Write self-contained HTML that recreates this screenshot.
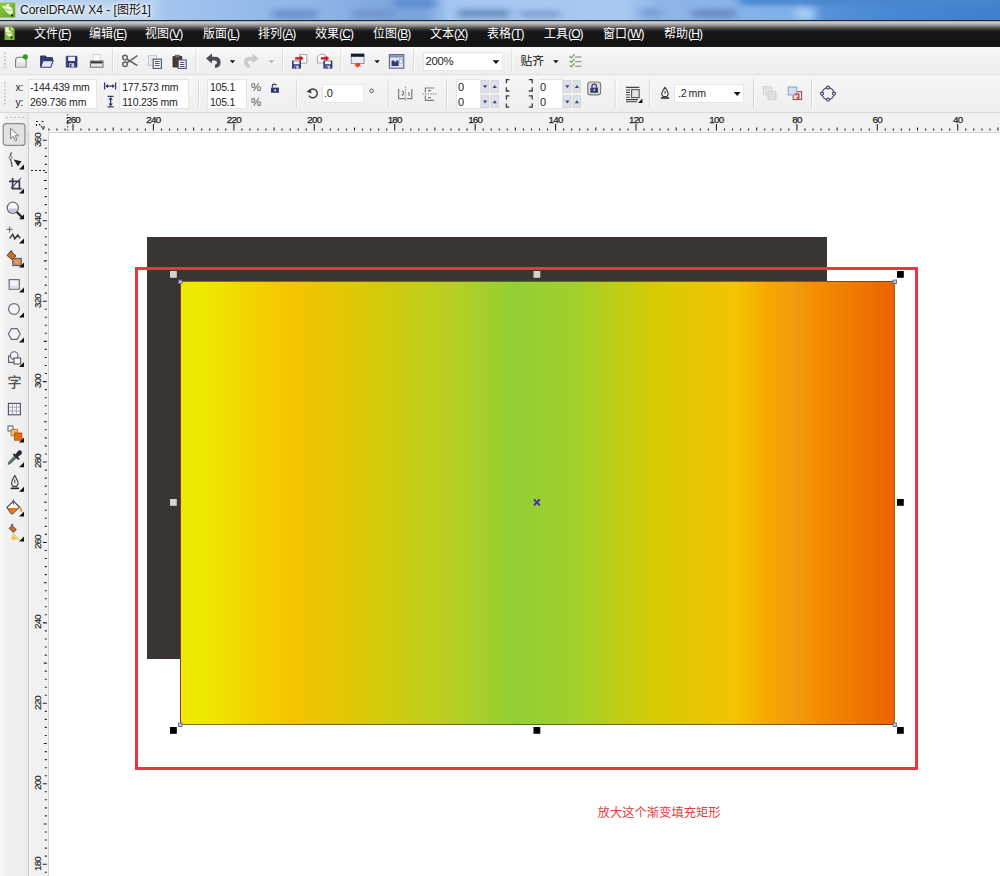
<!DOCTYPE html><html lang="zh"><head><meta charset="utf-8"><title>CorelDRAW X4 - [图形1]</title><style>
*{box-sizing:border-box;margin:0;padding:0}
html,body{width:1000px;height:876px;overflow:hidden;background:#fff}
body{position:relative;font-family:"Liberation Sans","Noto Sans CJK SC",sans-serif;font-size:11px;color:#222}
.abs{position:absolute}
#title{left:0;top:0;width:1000px;height:21px;overflow:hidden;background:#8cb3e7}
#title .t{left:20px;top:2px;font-size:12px;color:#111;text-shadow:0 0 5px #fff,0 0 3px #fff;white-space:nowrap;line-height:16px}
#tline{left:0;top:20px;width:1000px;height:1px;background:#1a2a3a}
#menu{left:0;top:21px;width:1000px;height:26px;background:linear-gradient(180deg,#8a8a8a 0,#d2d2d2 1px,#c2c2c2 2px,#9c9c9c 4px,#6a6a6a 6px,#3c3c3c 8px,#1e1e1e 10px,#151515 12px,#161616 100%)}
.mi{top:28px;height:13px;line-height:13px;font-size:12px;color:#fff;white-space:nowrap}
.mi u{text-decoration:underline}
.mi .l{font-size:12px;letter-spacing:-0.9px}
#tb1{left:0;top:47px;width:1000px;height:27px;background:linear-gradient(180deg,#fbfbfb 0,#f2f2f2 40%,#eeeeee 100%)}
#tb2{left:0;top:74px;width:1000px;height:39px;background:linear-gradient(180deg,#dcdcdc 0,#f7f7f7 2px,#f2f2f2 50%,#efefef 100%)}
#hr{left:0;top:112px;width:1000px;height:20.5px;background:#f1f1f1;border-top:1px solid #d9d9d9;border-bottom:1px solid #d6d6d6}
#tbox{left:0;top:113px;width:29px;height:763px;background:linear-gradient(90deg,#fafafa 0,#f0f0f0 7px,#efefef 24px,#e6e6e6 28px,#cfcfcf 29px)}
#vr{left:28px;top:132px;width:20.5px;height:744px;background:#f1f1f1;border-right:1px solid #d0d0d0;border-left:1px solid #cdcdcd}
#cv{left:48.5px;top:132.5px;width:952px;height:744px;background:#fff}
.inp{background:#fff;border:1px solid #e6e6e6}
.tx{white-space:nowrap;color:#222;font-size:10.5px;line-height:12px;height:12px;letter-spacing:-0.22px}
.rl{font-size:9.8px;line-height:10px;height:10px;color:#1a1a1a;white-space:nowrap;text-align:center;width:30px;letter-spacing:-0.75px;-webkit-text-stroke:0.25px #222}
.vl{font-size:9.8px;line-height:10px;height:10px;color:#1a1a1a;white-space:nowrap;text-align:center;width:30px;letter-spacing:-0.8px;-webkit-text-stroke:0.15px #222;transform:rotate(-90deg);transform-origin:50% 50%}
svg{position:absolute;left:0;top:0;overflow:visible}
</style></head><body>
<div id="title" class="abs"><svg width="1000" height="21" viewBox="0 0 1000 21" style="overflow:hidden">
<defs><filter id="bl" x="-20%" y="-100%" width="140%" height="300%"><feGaussianBlur stdDeviation="4 2.5"/></filter>
<linearGradient id="tg" x1="0" x2="1000" gradientUnits="userSpaceOnUse"><stop offset="0" stop-color="#cfdef0"/><stop offset=".145" stop-color="#c4d8f0"/><stop offset=".165" stop-color="#a3c4ee"/><stop offset=".25" stop-color="#95bbea"/><stop offset=".33" stop-color="#8cb3e7"/><stop offset=".40" stop-color="#7aa4dc"/><stop offset=".425" stop-color="#7aa4dc"/><stop offset=".45" stop-color="#a4c6f0"/><stop offset=".62" stop-color="#a8c9f1"/><stop offset=".66" stop-color="#8fb6e8"/><stop offset=".74" stop-color="#86b2ea"/><stop offset=".80" stop-color="#7eafea"/><stop offset=".825" stop-color="#5592da"/><stop offset=".9" stop-color="#4687d2"/><stop offset="1" stop-color="#3f80cc"/></linearGradient></defs>
<rect width="1000" height="21" fill="url(#tg)"/>
<g filter="url(#bl)">
<rect x="272" y="9" width="45" height="10" fill="#6f95cf"/>
<rect x="352" y="9" width="42" height="10" fill="#7299d2"/>
<rect x="395" y="-2" width="40" height="10" fill="#5f8fd2"/>
<rect x="458" y="9" width="52" height="9" fill="#7496c6"/>
<rect x="520" y="10" width="40" height="8" fill="#86a6d2"/>
<rect x="640" y="8" width="22" height="10" fill="#7ba2d8"/>
<rect x="692" y="9" width="44" height="9" fill="#6a90c8"/>
<rect x="740" y="-3" width="260" height="8" fill="#4a86cc"/>
<rect x="796" y="8" width="18" height="12" fill="#a4caf4"/>
<rect x="0" y="-4" width="150" height="8" fill="#b4cdee"/>
</g></svg><div class="abs t">CorelDRAW X4 - [图形1]</div></div>
<div id="tline" class="abs"></div>
<div id="menu" class="abs"></div>
<div class="abs mi" style="left:34px">文件<span class="l">(<u>F</u>)</span></div>
<div class="abs mi" style="left:89px">编辑<span class="l">(<u>E</u>)</span></div>
<div class="abs mi" style="left:145px">视图<span class="l">(<u>V</u>)</span></div>
<div class="abs mi" style="left:203px">版面<span class="l">(<u>L</u>)</span></div>
<div class="abs mi" style="left:258px">排列<span class="l">(<u>A</u>)</span></div>
<div class="abs mi" style="left:315px">效果<span class="l">(<u>C</u>)</span></div>
<div class="abs mi" style="left:373px">位图<span class="l">(<u>B</u>)</span></div>
<div class="abs mi" style="left:430px">文本<span class="l">(<u>X</u>)</span></div>
<div class="abs mi" style="left:487px">表格<span class="l">(<u>T</u>)</span></div>
<div class="abs mi" style="left:544px">工具<span class="l">(<u>O</u>)</span></div>
<div class="abs mi" style="left:603px">窗口<span class="l">(<u>W</u>)</span></div>
<div class="abs mi" style="left:664px">帮助<span class="l">(<u>H</u>)</span></div>
<div id="tb1" class="abs"></div><div id="tb2" class="abs"></div>
<div id="hr" class="abs"></div><div id="tbox" class="abs"></div><div id="vr" class="abs"></div>
<div id="cv" class="abs"></div>
<div class="abs" style="left:147px;top:237px;width:680px;height:422px;background:#3a3533"></div>
<div class="abs" style="left:180px;top:281px;width:715px;height:444px;border:1px solid rgba(50,40,20,.6);background:linear-gradient(90deg,#ecec00 0,#f0e600 4%,#f5c200 15.8%,#d7ca08 27%,#b8cf24 38%,#92cf34 47%,#a2d02c 55%,#d5cb06 66%,#f5c200 78%,#f4a800 82.5%,#f29c0c 86%,#f38e00 89%,#f07a00 94%,#ee6600 99%,#ee6400 100%)"></div>
<div class="abs" style="left:135px;top:267px;width:783px;height:503px;border:3px solid #e8383e"></div>
<div class="abs" style="left:597.6px;top:804.5px;font-size:12.3px;font-weight:400;color:#e23c40;white-space:nowrap;line-height:16px">放大这个渐变填充矩形</div>

<svg width="1000" height="876" viewBox="0 0 1000 876"><rect x="170" y="271" width="6.8" height="6.8" fill="#d2d2d2"/><rect x="533.5" y="271" width="6.8" height="6.8" fill="#d2d2d2"/><rect x="897" y="271" width="6.8" height="6.8" fill="#000"/><rect x="170" y="499" width="6.8" height="6.8" fill="#d2d2d2"/><rect x="897" y="499" width="6.8" height="6.8" fill="#000"/><rect x="170" y="727" width="6.8" height="6.8" fill="#000"/><rect x="533.5" y="727" width="6.8" height="6.8" fill="#000"/><rect x="897" y="727" width="6.8" height="6.8" fill="#000"/><rect x="178.60000000000002" y="280.1" width="3.4" height="3.4" fill="#c9cde6" stroke="#5a5f96" stroke-width=".9"/><rect x="893.0" y="280.1" width="3.4" height="3.4" fill="#c9cde6" stroke="#5a5f96" stroke-width=".9"/><rect x="178.60000000000002" y="723.0999999999999" width="3.4" height="3.4" fill="#c9cde6" stroke="#5a5f96" stroke-width=".9"/><rect x="893.0" y="723.0999999999999" width="3.4" height="3.4" fill="#c9cde6" stroke="#5a5f96" stroke-width=".9"/><path d="M534 499.4l5.800 5.800M539.800 499.400l-5.800 5.800" stroke="#4a2ea6" stroke-width="2" fill="none"/></svg>
<svg width="1000" height="876" viewBox="0 0 1000 876"><path d="M48.9 128.6v2M56.9 128.6v2M65.0 128.6v2M73.0 124.0v6.6M81.0 128.6v2M89.1 128.6v2M97.1 128.6v2M105.2 128.6v2M113.2 127.6v3M121.3 128.6v2M129.3 128.6v2M137.3 128.6v2M145.4 128.6v2M153.4 124.0v6.6M161.5 128.6v2M169.5 128.6v2M177.6 128.6v2M185.6 128.6v2M193.6 127.6v3M201.7 128.6v2M209.7 128.6v2M217.8 128.6v2M225.8 128.6v2M233.9 124.0v6.6M241.9 128.6v2M249.9 128.6v2M258.0 128.6v2M266.0 128.6v2M274.1 127.6v3M282.1 128.6v2M290.2 128.6v2M298.2 128.6v2M306.2 128.6v2M314.3 124.0v6.6M322.3 128.6v2M330.4 128.6v2M338.4 128.6v2M346.5 128.6v2M354.5 127.6v3M362.5 128.6v2M370.6 128.6v2M378.6 128.6v2M386.7 128.6v2M394.7 124.0v6.6M402.8 128.6v2M410.8 128.6v2M418.8 128.6v2M426.9 128.6v2M434.9 127.6v3M443.0 128.6v2M451.0 128.6v2M459.1 128.6v2M467.1 128.6v2M475.2 124.0v6.6M483.2 128.6v2M491.2 128.6v2M499.3 128.6v2M507.3 128.6v2M515.4 127.6v3M523.4 128.6v2M531.5 128.6v2M539.5 128.6v2M547.5 128.6v2M555.6 124.0v6.6M563.6 128.6v2M571.7 128.6v2M579.7 128.6v2M587.8 128.6v2M595.8 127.6v3M603.8 128.6v2M611.9 128.6v2M619.9 128.6v2M628.0 128.6v2M636.0 124.0v6.6M644.1 128.6v2M652.1 128.6v2M660.1 128.6v2M668.2 128.6v2M676.2 127.6v3M684.3 128.6v2M692.3 128.6v2M700.4 128.6v2M708.4 128.6v2M716.4 124.0v6.6M724.5 128.6v2M732.5 128.6v2M740.6 128.6v2M748.6 128.6v2M756.7 127.6v3M764.7 128.6v2M772.7 128.6v2M780.8 128.6v2M788.8 128.6v2M796.9 124.0v6.6M804.9 128.6v2M813.0 128.6v2M821.0 128.6v2M829.0 128.6v2M837.1 127.6v3M845.1 128.6v2M853.2 128.6v2M861.2 128.6v2M869.3 128.6v2M877.3 124.0v6.6M885.3 128.6v2M893.4 128.6v2M901.4 128.6v2M909.5 128.6v2M917.5 127.6v3M925.6 128.6v2M933.6 128.6v2M941.6 128.6v2M949.7 128.6v2M957.7 124.0v6.6M965.8 128.6v2M973.8 128.6v2M981.9 128.6v2M989.9 128.6v2M997.9 127.6v3" stroke="#222" stroke-width="1.1" fill="none"/><path d="M42.8 140.3h4M44.8 148.3h2M44.8 156.4h2M44.8 164.4h2M44.8 172.5h2M43.8 180.5h3M44.8 188.6h2M44.8 196.6h2M44.8 204.6h2M44.8 212.7h2M42.8 220.7h4M44.8 228.8h2M44.8 236.8h2M44.8 244.9h2M44.8 252.9h2M43.8 260.9h3M44.8 269.0h2M44.8 277.0h2M44.8 285.1h2M44.8 293.1h2M42.8 301.2h4M44.8 309.2h2M44.8 317.2h2M44.8 325.3h2M44.8 333.3h2M43.8 341.4h3M44.8 349.4h2M44.8 357.5h2M44.8 365.5h2M44.8 373.5h2M42.8 381.6h4M44.8 389.6h2M44.8 397.7h2M44.8 405.7h2M44.8 413.8h2M43.8 421.8h3M44.8 429.8h2M44.8 437.9h2M44.8 445.9h2M44.8 454.0h2M42.8 462.0h4M44.8 470.1h2M44.8 478.1h2M44.8 486.1h2M44.8 494.2h2M43.8 502.2h3M44.8 510.3h2M44.8 518.3h2M44.8 526.4h2M44.8 534.4h2M42.8 542.5h4M44.8 550.5h2M44.8 558.5h2M44.8 566.6h2M44.8 574.6h2M43.8 582.7h3M44.8 590.7h2M44.8 598.8h2M44.8 606.8h2M44.8 614.8h2M42.8 622.9h4M44.8 630.9h2M44.8 639.0h2M44.8 647.0h2M44.8 655.1h2M43.8 663.1h3M44.8 671.1h2M44.8 679.2h2M44.8 687.2h2M44.8 695.3h2M42.8 703.3h4M44.8 711.4h2M44.8 719.4h2M44.8 727.4h2M44.8 735.5h2M43.8 743.5h3M44.8 751.6h2M44.8 759.6h2M44.8 767.7h2M44.8 775.7h2M42.8 783.7h4M44.8 791.8h2M44.8 799.8h2M44.8 807.9h2M44.8 815.9h2M43.8 824.0h3M44.8 832.0h2M44.8 840.0h2M44.8 848.1h2M44.8 856.1h2M42.8 864.2h4M44.8 872.2h2" stroke="#222" stroke-width="1.1" fill="none"/><path d="M67.7 114v17" stroke="#444" stroke-width="1" stroke-dasharray="1.5 1.5" fill="none"/><path d="M31 170.5h16" stroke="#222" stroke-width="1" stroke-dasharray="2 2" fill="none"/><path d="M36 121.5h3M41.5 121.5h3M36.5 124v2.5M39 124l5 5M44 126v3h-3" stroke="#222" stroke-width="1.1" fill="none" stroke-dasharray="2 1"/></svg>
<div class="abs rl" style="left:58.0px;top:115.2px">260</div>
<div class="abs rl" style="left:138.4px;top:115.2px">240</div>
<div class="abs rl" style="left:218.9px;top:115.2px">220</div>
<div class="abs rl" style="left:299.3px;top:115.2px">200</div>
<div class="abs rl" style="left:379.7px;top:115.2px">180</div>
<div class="abs rl" style="left:460.2px;top:115.2px">160</div>
<div class="abs rl" style="left:540.6px;top:115.2px">140</div>
<div class="abs rl" style="left:621.0px;top:115.2px">120</div>
<div class="abs rl" style="left:701.4px;top:115.2px">100</div>
<div class="abs rl" style="left:781.9px;top:115.2px">80</div>
<div class="abs rl" style="left:862.3px;top:115.2px">60</div>
<div class="abs rl" style="left:942.7px;top:115.2px">40</div>
<div class="abs vl" style="left:23.3px;top:134.7px">360</div>
<div class="abs vl" style="left:23.3px;top:215.1px">340</div>
<div class="abs vl" style="left:23.3px;top:295.6px">320</div>
<div class="abs vl" style="left:23.3px;top:376.0px">300</div>
<div class="abs vl" style="left:23.3px;top:456.4px">280</div>
<div class="abs vl" style="left:23.3px;top:536.9px">260</div>
<div class="abs vl" style="left:23.3px;top:617.3px">240</div>
<div class="abs vl" style="left:23.3px;top:697.7px">220</div>
<div class="abs vl" style="left:23.3px;top:778.1px">200</div>
<div class="abs vl" style="left:23.3px;top:858.6px">180</div>
<div class="abs inp" style="left:27.5px;top:78.8px;width:69.1px;height:30.60000000000001px"></div>
<div class="abs inp" style="left:119.2px;top:78.8px;width:70.2px;height:30.60000000000001px"></div>
<div class="abs inp" style="left:207px;top:78.8px;width:39.599999999999994px;height:30.60000000000001px"></div>
<div class="abs inp" style="left:321.6px;top:83.6px;width:42.0px;height:19.200000000000003px"></div>
<div class="abs inp" style="left:455.6px;top:78.8px;width:25.399999999999977px;height:30.60000000000001px"></div>
<div class="abs inp" style="left:537.6px;top:78.8px;width:25.399999999999977px;height:30.60000000000001px"></div>
<div class="abs inp" style="left:674.4px;top:84.2px;width:69.60000000000002px;height:18.599999999999994px"></div>
<div class="abs inp" style="left:422.6px;top:51.8px;width:80.79999999999995px;height:19.200000000000003px"></div>
<div class="abs tx" style="left:15.6px;top:81px;">x:</div>
<div class="abs tx" style="left:15.6px;top:96.2px;">y:</div>
<div class="abs tx" style="left:30px;top:81px;">-144.439 mm</div>
<div class="abs tx" style="left:30px;top:96.2px;">269.736 mm</div>
<div class="abs tx" style="left:122.2px;top:81px;">177.573 mm</div>
<div class="abs tx" style="left:122.2px;top:96.2px;">110.235 mm</div>
<div class="abs tx" style="left:210px;top:81px;">105.1</div>
<div class="abs tx" style="left:210px;top:96.2px;">105.1</div>
<div class="abs tx" style="left:251px;top:81px;font-size:11.5px;color:#555">%</div>
<div class="abs tx" style="left:251px;top:96.2px;font-size:11.5px;color:#555">%</div>
<div class="abs tx" style="left:324px;top:87.2px;font-size:11px">.0</div>
<div class="abs tx" style="left:458px;top:81px;font-size:11px">0</div>
<div class="abs tx" style="left:458px;top:96.2px;font-size:11px">0</div>
<div class="abs tx" style="left:540px;top:81px;font-size:11px">0</div>
<div class="abs tx" style="left:540px;top:96.2px;font-size:11px">0</div>
<div class="abs tx" style="left:678px;top:87.4px;font-size:10.6px;word-spacing:-0.5px">.2 mm</div>
<div class="abs tx" style="left:425.6px;top:55px;font-size:11.3px;letter-spacing:-0.3px">200%</div>
<div class="abs tx" style="left:520.6px;top:54.6px;font-size:11.8px;color:#111;line-height:13px;height:13px">贴齐</div>
<svg width="1000" height="876" viewBox="0 0 1000 876"><rect x="4.2" y="52.5" width="1.6" height="1.6" fill="#c2c2c2"/><rect x="4.2" y="56.0" width="1.6" height="1.6" fill="#c2c2c2"/><rect x="4.2" y="59.5" width="1.6" height="1.6" fill="#c2c2c2"/><rect x="4.2" y="63.0" width="1.6" height="1.6" fill="#c2c2c2"/><rect x="4.2" y="66.5" width="1.6" height="1.6" fill="#c2c2c2"/><rect x="4.2" y="82" width="1.6" height="1.6" fill="#c2c2c2"/><rect x="4.2" y="85.5" width="1.6" height="1.6" fill="#c2c2c2"/><rect x="4.2" y="89.0" width="1.6" height="1.6" fill="#c2c2c2"/><rect x="4.2" y="92.5" width="1.6" height="1.6" fill="#c2c2c2"/><rect x="4.2" y="96.0" width="1.6" height="1.6" fill="#c2c2c2"/><rect x="4.2" y="99.5" width="1.6" height="1.6" fill="#c2c2c2"/><rect x="4.2" y="103.0" width="1.6" height="1.6" fill="#c2c2c2"/><path d="M112.5 49.5v21.5" stroke="#dadada" stroke-width="1"/><path d="M113.5 49.5v21.5" stroke="#fdfdfd" stroke-width="1"/><path d="M196 49.5v21.5" stroke="#dadada" stroke-width="1"/><path d="M197 49.5v21.5" stroke="#fdfdfd" stroke-width="1"/><path d="M282.6 49.5v21.5" stroke="#dadada" stroke-width="1"/><path d="M283.6 49.5v21.5" stroke="#fdfdfd" stroke-width="1"/><path d="M340.8 49.5v21.5" stroke="#dadada" stroke-width="1"/><path d="M341.8 49.5v21.5" stroke="#fdfdfd" stroke-width="1"/><path d="M413.6 49.5v21.5" stroke="#dadada" stroke-width="1"/><path d="M414.6 49.5v21.5" stroke="#fdfdfd" stroke-width="1"/><path d="M511.8 49.5v21.5" stroke="#dadada" stroke-width="1"/><path d="M512.8 49.5v21.5" stroke="#fdfdfd" stroke-width="1"/><path d="M198.4 79v29" stroke="#d4d4d4" stroke-width="1"/><path d="M199.4 79v29" stroke="#fdfdfd" stroke-width="1"/><path d="M296.4 79v29" stroke="#d4d4d4" stroke-width="1"/><path d="M297.4 79v29" stroke="#fdfdfd" stroke-width="1"/><path d="M388.3 79v29" stroke="#d4d4d4" stroke-width="1"/><path d="M389.3 79v29" stroke="#fdfdfd" stroke-width="1"/><path d="M446.6 79v29" stroke="#d4d4d4" stroke-width="1"/><path d="M447.6 79v29" stroke="#fdfdfd" stroke-width="1"/><path d="M615.2 79v29" stroke="#d4d4d4" stroke-width="1"/><path d="M616.2 79v29" stroke="#fdfdfd" stroke-width="1"/><path d="M649.4 79v29" stroke="#d4d4d4" stroke-width="1"/><path d="M650.4 79v29" stroke="#fdfdfd" stroke-width="1"/><path d="M753.5 79v29" stroke="#d4d4d4" stroke-width="1"/><path d="M754.5 79v29" stroke="#fdfdfd" stroke-width="1"/><path d="M811.6 79v29" stroke="#d4d4d4" stroke-width="1"/><path d="M812.6 79v29" stroke="#fdfdfd" stroke-width="1"/><path d="M15.6 67V60.5q0-3.2 3.2-3.2H26V67z" fill="#f4f4f6" stroke="#7a7a80" stroke-width="1.1"/><path d="M16.2 62.5h9.3V66.5h-9.3z" fill="#e2e2e8"/><circle cx="25.3" cy="56.8" r="2.6" fill="#2d9a27"/><path d="M40.6 67V56h5l1.2 1.6h5.6V60" fill="#353a72" stroke="#353a72" stroke-width="1"/><path d="M40.8 67.2l2.2-6.6h10.2l-2.4 6.6z" fill="#e9e9f2" stroke="#353a72" stroke-width="1.1"/><path d="M66.2 56.3h10.8v10.8h-10.8z" fill="#353a72" stroke="#353a72" stroke-width=".8"/><rect x="68.2" y="56.8" width="6.8" height="4.2" fill="#f2f2f8"/><rect x="69" y="63.2" width="5.2" height="3.9" fill="#c9cbe0"/><rect x="69.8" y="64" width="1.6" height="3" fill="#353a72"/><rect x="93" y="54.4" width="7.2" height="7" fill="#fff" stroke="#c8c8c8" stroke-width=".8"/><rect x="90.4" y="61" width="12.6" height="6.2" fill="#e6e6e6" stroke="#6a6a6a" stroke-width="1"/><rect x="91" y="61.4" width="11.4" height="2" fill="#333"/><g fill="none" stroke="#636368" stroke-width="1.5"><circle cx="125" cy="57.6" r="2.3"/><circle cx="125" cy="64.2" r="2.3"/><path d="M126.8 59l10.6 6.6M126.8 62.8l10.6-7.2"/></g><rect x="148.6" y="55.8" width="8" height="9.4" fill="#f4f4f8" stroke="#b4b6c8" stroke-width=".9"/><path d="M150 58.5h5M150 60.5h5M150 62.5h3" stroke="#c2c4d4" stroke-width=".8"/><rect x="153.2" y="59.2" width="8.2" height="9.2" fill="#f6f6fa" stroke="#4a4e80" stroke-width="1.1"/><path d="M155 61.5h4.6M155 63.5h4.6M155 65.5h4.6" stroke="#4a4e80" stroke-width="1"/><rect x="173" y="56.6" width="8.8" height="10.4" fill="#4a3a30" stroke="#2e2a2a" stroke-width=".8"/><rect x="175.3" y="55.2" width="4.2" height="2.4" fill="#777" stroke="#444" stroke-width=".6"/><rect x="178.2" y="60" width="8" height="8.4" fill="#f6f6fa" stroke="#4a4e80" stroke-width="1.1"/><path d="M180 62.5h4.4M180 64.5h4.4M180 66.5h4.4" stroke="#4a4e80" stroke-width="1"/><g transform="translate(206 0)"><path d="M0 58.4L6 53.6V56.8H8.4Q14.6 56.8 14.6 62.2Q14.6 67.4 9 68V64.8Q11 64.4 11 62.4Q11 60.4 8.4 60.4H6V63.4z" fill="#4b4b58"/></g><path d="M229.8 60.2h5.4l-2.7 3z" fill="#111"/><g transform="translate(258.6 0) scale(-1 1)"><path d="M0 58.4L6 53.6V56.8H8.4Q14.6 56.8 14.6 62.2Q14.6 67.4 9 68V64.8Q11 64.4 11 62.4Q11 60.4 8.4 60.4H6V63.4z" fill="#cbcbcb"/></g><path d="M268.8 60.2h5.4l-2.7 3z" fill="#b4b4b4"/><path d="M299.6 54.6h7.2v8.6h-7.2z" fill="#fbfbfd" stroke="#9a9aa6" stroke-width=".9"/><rect x="292" y="60.6" width="9" height="8" fill="#353a72"/><rect x="293.6" y="61.2" width="5.8" height="3" fill="#f0f0f8"/><rect x="294.2" y="65.6" width="4.6" height="3" fill="#c9cbe0"/><rect x="294.8" y="66.2" width="1.4" height="2.4" fill="#353a72"/><path d="M295.2 57.2h5v-1.8l3.4 2.9l-3.4 2.9v-1.8h-5z" fill="#d21414"/><path d="M317.4 63V57l2.6-2.6h4.8V63z" fill="#fbfbfd" stroke="#9a9aa6" stroke-width=".9"/><rect x="323.4" y="60.6" width="9" height="8" fill="#353a72"/><rect x="325.0" y="61.2" width="5.8" height="3" fill="#f0f0f8"/><rect x="325.59999999999997" y="65.6" width="4.6" height="3" fill="#c9cbe0"/><rect x="326.2" y="66.2" width="1.4" height="2.4" fill="#353a72"/><path d="M320.8 57.2h5v-1.8l3.4 2.9l-3.4 2.9v-1.8h-5z" fill="#d21414"/><rect x="351.2" y="54" width="12.8" height="9.6" fill="#e9ecf6" stroke="#7a7e98" stroke-width=".8"/><rect x="351" y="53.8" width="13.2" height="3" fill="#1b1b22"/><path d="M354.4 66.5l1.6-3.4h3.4l1.6 3.4l-1.8-.6l-1.5 2l-1.5-2z" fill="#e8401a"/><path d="M374.4 60.2h5.4l-2.7 3z" fill="#111"/><rect x="389.4" y="54.6" width="14.4" height="13.6" fill="#dfe3f4" stroke="#5a5e92" stroke-width="1.1"/><rect x="390" y="55.2" width="13.2" height="2.4" fill="#8c90b8"/><path d="M391.6 66V60.6h2.4l1.2 2l1.2-2h2.2V66z" fill="#353a72"/><rect x="399.2" y="59.4" width="3.2" height="3.6" fill="#fff" stroke="#8c90b8" stroke-width=".6"/><path d="M492.6 60.2h6.8l-3.4 3.8z" fill="#111"/><path d="M553.2 60.2h5.4l-2.7 3z" fill="#111"/><path d="M569.6 56l1.8 1.8l3.2-3.6" fill="none" stroke="#6f9a62" stroke-width="1.2"/><path d="M575 57h6.4" stroke="#8a8a8a" stroke-width="1.1"/><path d="M569.6 60.6l1.8 1.8l3.2-3.6" fill="none" stroke="#6f9a62" stroke-width="1.2"/><path d="M575 61.6h6.4" stroke="#8a8a8a" stroke-width="1.1"/><path d="M569.6 65.2l1.8 1.8l3.2-3.6" fill="none" stroke="#6f9a62" stroke-width="1.2"/><path d="M575 66.2h6.4" stroke="#8a8a8a" stroke-width="1.1"/><g stroke="#353a72" stroke-width="1.3" fill="#353a72"><path d="M104.6 82.6v7M115.6 82.6v7M106 86.1h8"/><path d="M105.4 86.1l2.6-2.2v4.4zM114.8 86.1l-2.6-2.2v4.4z" stroke="none"/></g><g stroke="#353a72" stroke-width="1.3" fill="#353a72"><path d="M107.6 96.4h6M107.6 106.8h6M110.6 98v7.4"/><path d="M110.6 97l-2.2 2.8h4.4zM110.6 106.2l-2.2-2.8h4.4z" stroke="none"/></g><rect x="271" y="87.6" width="8" height="5.2" fill="#353a72"/><path d="M272.4 87.6v-1.6q0-1.8 2-1.8q1.6 0 1.9 1.2" fill="none" stroke="#353a72" stroke-width="1.2"/><rect x="274.4" y="89.2" width="1.4" height="2" fill="#e8e8f4"/><path d="M309.6 90.4A4.4 4.4 0 1 1 309 95.6" fill="none" stroke="#3a3a3a" stroke-width="1.4"/><path d="M306.4 91.4l4.6-2.6l.4 4.6z" fill="#3a3a3a"/><circle cx="371.6" cy="90.8" r="1.8" fill="none" stroke="#555" stroke-width="1"/><g fill="none" stroke="#7c7c80" stroke-width="1.2"><path d="M398.6 89v9.6h6.4M401.6 91.2q2 0 2 2t-2 2M411.8 89v9.6h-5M409 92v4"/><path d="M405.4 86.6v14" stroke-dasharray="1.5 1" stroke="#8a8a8e" stroke-width="1"/></g><g fill="none" stroke="#7c7c80" stroke-width="1.2"><path d="M434 88h-8.6v4.4M434 100.4h-8.6v-5"/><path d="M422.6 94h14" stroke-dasharray="1.5 1" stroke="#8a8a8e" stroke-width="1"/><path d="M428 90.6h3M428 97.6h3"/></g><rect x="481.4" y="80.6" width="7.4" height="11.6" fill="#dde1ea" stroke="#c4c8d4" stroke-width=".6"/><path d="M483.0 85.19999999999999h4.2l-2.1 3z" fill="#3c4478"/><rect x="491.0" y="80.6" width="7.4" height="11.6" fill="#dde1ea" stroke="#c4c8d4" stroke-width=".6"/><path d="M492.59999999999997 88.0h4.2l-2.1-3z" fill="#3c4478"/><rect x="563.6" y="80.6" width="7.4" height="11.6" fill="#dde1ea" stroke="#c4c8d4" stroke-width=".6"/><path d="M565.2 85.19999999999999h4.2l-2.1 3z" fill="#3c4478"/><rect x="573.2" y="80.6" width="7.4" height="11.6" fill="#dde1ea" stroke="#c4c8d4" stroke-width=".6"/><path d="M574.8000000000001 88.0h4.2l-2.1-3z" fill="#3c4478"/><rect x="481.4" y="95.8" width="7.4" height="11.6" fill="#dde1ea" stroke="#c4c8d4" stroke-width=".6"/><path d="M483.0 100.39999999999999h4.2l-2.1 3z" fill="#3c4478"/><rect x="491.0" y="95.8" width="7.4" height="11.6" fill="#dde1ea" stroke="#c4c8d4" stroke-width=".6"/><path d="M492.59999999999997 103.2h4.2l-2.1-3z" fill="#3c4478"/><rect x="563.6" y="95.8" width="7.4" height="11.6" fill="#dde1ea" stroke="#c4c8d4" stroke-width=".6"/><path d="M565.2 100.39999999999999h4.2l-2.1 3z" fill="#3c4478"/><rect x="573.2" y="95.8" width="7.4" height="11.6" fill="#dde1ea" stroke="#c4c8d4" stroke-width=".6"/><path d="M574.8000000000001 103.2h4.2l-2.1-3z" fill="#3c4478"/><g fill="none" stroke="#3a3a3a" stroke-width="1.3"><path d="M509.4 79.6h-3v3.6M506.4 87.19999999999999v3.8h3M528.8 79.6h3.4v3.6M532.2 87.19999999999999v3.8h-3.4"/></g><g fill="none" stroke="#3a3a3a" stroke-width="1.3"><path d="M509.4 95.8h-3v3.6M506.4 103.39999999999999v3.8h3M528.8 95.8h3.4v3.6M532.2 103.39999999999999v3.8h-3.4"/></g><rect x="587.8" y="82" width="12.8" height="12.8" rx="2.6" fill="#dcdcdc" stroke="#7e7e7e" stroke-width="1.2"/><rect x="590.4" y="87.6" width="7.6" height="5.2" fill="#353a72"/><path d="M592 87.6v-1.4q0-2 2.2-2t2.2 2v1.4" fill="none" stroke="#353a72" stroke-width="1.3"/><rect x="593.6" y="89.2" width="1.3" height="1.8" fill="#dfe0f0"/><g stroke="#444" stroke-width="1.1" fill="none"><path d="M626 87.4h13.4M626 99.6h12M626 101.800h11M626 90h4M626 92.4h4M626 94.8h4M626 97.200h4"/><rect x="631.6" y="89.6" width="7.6" height="8" fill="#e4e4ea" stroke="#555"/></g><path d="M642.4 98.6v4.4h-4.4z" fill="#111"/><g transform="translate(660.8 87.4) scale(1)"><path d="M4.2 0Q0.8 4.6 1 7.2L2.4 9.2H6L7.4 7.2Q7.6 4.6 4.2 0z" fill="#f4f4f4" stroke="#3a3a3a" stroke-width="1.1"/><path d="M4.2 3.4v3" stroke="#3a3a3a" stroke-width="1"/><path d="M0 10.6h8.4" stroke="#222" stroke-width="1.5"/></g><path d="M733.8 92h6.8l-3.4 4z" fill="#111"/><rect x="763.4" y="86.8" width="8" height="8" fill="#ebebeb" stroke="#cdcdcd" stroke-width="1"/><rect x="768" y="91.6" width="8" height="8" fill="#dedede" stroke="#cfcfcf" stroke-width="1"/><rect x="765.6" y="89" width="3.4" height="3.4" fill="none" stroke="#d2d2d2" stroke-width=".8"/><rect x="793.2" y="91.6" width="8.4" height="8" fill="#f8e4e4" stroke="#7a5050" stroke-width="1"/><rect x="788.2" y="87" width="8.6" height="8" fill="#d2dff0" stroke="#8aa0c6" stroke-width="1"/><path d="M794.600 94.200h4.200v3.800h-2.400" fill="none" stroke="#d42a2a" stroke-width="1.300"/><g fill="#f2f2f6" stroke="#50506a" stroke-width="1.3"><circle cx="828" cy="93.6" r="6" fill="none"/><circle cx="828" cy="87.6" r="1.5"/><circle cx="828" cy="99.6" r="1.5"/><circle cx="822" cy="93.6" r="1.5"/><circle cx="834" cy="93.6" r="1.5"/></g></svg>
<svg width="1000" height="876" viewBox="0 0 1000 876"><rect x="6" y="116.6" width="1.6" height="1.6" fill="#c0c0c0"/><rect x="10" y="116.6" width="1.6" height="1.6" fill="#c0c0c0"/><rect x="14" y="116.6" width="1.6" height="1.6" fill="#c0c0c0"/><rect x="18" y="116.6" width="1.6" height="1.6" fill="#c0c0c0"/><rect x="22" y="116.6" width="1.6" height="1.6" fill="#c0c0c0"/><rect x="3.2" y="123.6" width="21.8" height="21.8" rx="3" fill="#e2e2e2" stroke="#8c8c8c" stroke-width="1.2"/><path d="M10.6 128.2v10.6l2.6-2.4l2 4.4l1.8-.8l-2-4.2h3.6z" fill="#f6f6f8" stroke="#7a7a8a" stroke-width="1"/><path d="M11.6 152.4q-2.4 4-.6 8.600q1 3 1 6" fill="none" stroke="#555" stroke-width="1.2"/><circle cx="10.6" cy="157.6" r="1.5" fill="#fff" stroke="#555" stroke-width=".9"/><path d="M13.6 159.6l8 1.6l-3.6 5z" fill="#222"/><path d="M24 164.4v5h-5z" fill="#111"/><g stroke="#3a3a56" stroke-width="1.7" fill="none"><path d="M12.6 178v10.6h9M9 181.400h10.4v8.4"/><path d="M20.800 178.400l-10 10" stroke-width="1.1"/></g><path d="M24 188.4v5h-5z" fill="#111"/><circle cx="12.8" cy="207.800" r="5.600" fill="#f8f8fa" stroke="#6a6a72" stroke-width="1.3"/><path d="M8.400 208.400h8.800a4.400 4.400 0 0 1-8.800 0z" fill="#c4c6da"/><path d="M16.800 212l5 5" stroke="#222" stroke-width="2"/><path d="M24 214.2v5h-5z" fill="#111"/><path d="M9.600 226.400v6M6.600 229.400h6" stroke="#777" stroke-width="1.2"/><path d="M9.600 238.400l3.200-4l2 4.400l3-3.800l2.400 3.400" fill="none" stroke="#333" stroke-width="1.4"/><path d="M24 238.6v5h-5z" fill="#111"/><path d="M7 255.400l3.600-4.200l5.400 4.600l-3.600 4.200z" fill="#d0701c" stroke="#5a3a1a" stroke-width=".9"/><path d="M9.400 252.800l1.800-2l1.600 1.400" fill="none" stroke="#333" stroke-width="1"/><rect x="12.800" y="258.400" width="8.400" height="7.200" fill="#d88a3c" stroke="#5a5e92" stroke-width="1.2"/><rect x="14.600" y="260.200" width="4.800" height="3.600" fill="#e8a050"/><path d="M24 262.4v5h-5z" fill="#111"/><rect x="9.200" y="279.600" width="10" height="9.600" fill="#f4f4f8" stroke="#6a6a74" stroke-width="1.2"/><path d="M9.800 286h8.800v2.600h-8.800z" fill="#dcdce6"/><path d="M24 287.6v5h-5z" fill="#111"/><circle cx="14" cy="309" r="5.400" fill="#f4f4f8" stroke="#6a6a74" stroke-width="1.2"/><path d="M24 312.4v5h-5z" fill="#111"/><path d="M8.400 334l3-5.400h5.800l3 5.400l-3 5.400h-5.800z" fill="#f4f4f8" stroke="#6a6a74" stroke-width="1.2"/><path d="M24 337.4v5h-5z" fill="#111"/><g fill="#f6f6fa" stroke="#5a5a6a" stroke-width="1.1"><path d="M8.600 356h6v6.400h-6z"/><circle cx="14.200" cy="355.600" r="3.800"/><rect x="14" y="358" width="6.600" height="6"/></g><path d="M24 362v5h-5z" fill="#111"/><g fill="#f6f6fa" stroke="#4a4a6a" stroke-width="1.1"><rect x="8.400" y="403.400" width="12" height="11.400"/><path d="M8.400 407.200h12M8.400 411h12M12.400 403.400v11.400M16.400 403.400v11.400" fill="none" stroke-width=".7" stroke="#8a8aa6"/></g><rect x="8" y="426" width="5" height="5" fill="#fff" stroke="#4a5a8a" stroke-width="1"/><rect x="11" y="429.400" width="6.400" height="6.400" fill="#f0c060" stroke="#a07830" stroke-width=".9"/><rect x="14.600" y="433" width="7.200" height="7.200" fill="#e86a10" stroke="#b04a08" stroke-width=".9"/><path d="M24 437.4v5h-5z" fill="#111"/><path d="M8 464.400l1-2.600l6.600-7l2 2l-7 6.600z" fill="#5a7a7a" stroke="#4a5a5a" stroke-width=".8"/><path d="M14.600 455.600l3.400-4.600q2-1.600 3.400 0q1.400 1.600-.2 3.400l-4.400 3.400z" fill="#2a2a3a"/><path d="M13.400 454l5.600 5.400" stroke="#2a2a3a" stroke-width="2"/><path d="M24 462.2v5h-5z" fill="#111"/><g transform="translate(10.600 475.600) scale(1 1.18)"><path d="M4.200 0Q0.800 4.600 1 7.200L2.400 9.200H6L7.400 7.200Q7.600 4.600 4.200 0z" fill="#f4f4f4" stroke="#3a3a3a" stroke-width="1.100"/><path d="M4.200 3.400v3" stroke="#3a3a3a" stroke-width="1"/><path d="M0 10.800h8.400" stroke="#222" stroke-width="1.400"/></g><path d="M24 486.8v5h-5z" fill="#111"/><path d="M7 507.400l6.400-6.400l6 6l-6.400 6.400q-1 .8-2 0z" fill="#fafafa" stroke="#4a4a5a" stroke-width="1.200"/><path d="M8 508h10.400l-5.200 5.200q-1 .8-2 0z" fill="#e8761a"/><path d="M13.400 499.400v5" stroke="#4a5a9a" stroke-width="1.200"/><path d="M19.400 507q2.400 1.600 1.600 4.600" fill="none" stroke="#e8761a" stroke-width="1.500"/><path d="M24 511.4v5h-5z" fill="#111"/><path d="M9 528.400l3-3l4.400 4.200l-3 3z" fill="#c46a2a" stroke="#5a4a6a" stroke-width=".9"/><path d="M11.400 525.600l1.600-1.600" stroke="#4a4a8a" stroke-width="1.600"/><path d="M13 533l6.600 6.400h-8.400z" fill="#e8c040"/><path d="M12.600 534.600l6 5.200" stroke="#f0d878" stroke-width="2"/><path d="M24 536.4v5h-5z" fill="#111"/></svg>
<div class="abs" style="left:7.600px;top:374px;font-size:14px;line-height:16px;height:16px;color:#555;font-weight:500;white-space:nowrap">字</div>
<svg width="1000" height="876" viewBox="0 0 1000 876">
<defs><linearGradient id="lg1" x1="0" y1="0" x2="1" y2="1"><stop offset="0" stop-color="#8cc63c"/><stop offset="1" stop-color="#6aa820"/></linearGradient></defs>
<rect x="0" y="2.7" width="15.3" height="14.8" fill="url(#lg1)"/>
<path d="M1.8 6.200L4 5.200L6.400 7.400L5.600 4.400L9.600 3.800L9 6.600L11.800 7.600Q13.400 10.600 12.400 14.200L9.600 14.400Q6 12.800 4.800 9.400z" fill="#eef8dc"/>
<path d="M5.400 8.800q2.600 2 6 1.200" fill="none" stroke="#86c03a" stroke-width="1"/>
<circle cx="12.100" cy="15.400" r="1.100" fill="#0a1a0a"/>
<path d="M4.600 26.600h6.600l3.400 3.200v10.200h-10z" fill="#7cb834"/>
<path d="M11.200 26.600l3.400 3.200h-3.400z" fill="#cfe6a8"/>
<path d="M5.200 27.200L8.800 27L8.600 29.800L11 31.400Q12.400 34 11.400 36.200L9 36.400Q6.400 35 5.600 32z" fill="#eef8dc"/>
<path d="M6.200 32.200q2 1.400 4.600 .8" fill="none" stroke="#7cb834" stroke-width=".9"/>
<circle cx="11.500" cy="37.500" r="1.100" fill="#0a1a0a"/>
</svg>

</body></html>
